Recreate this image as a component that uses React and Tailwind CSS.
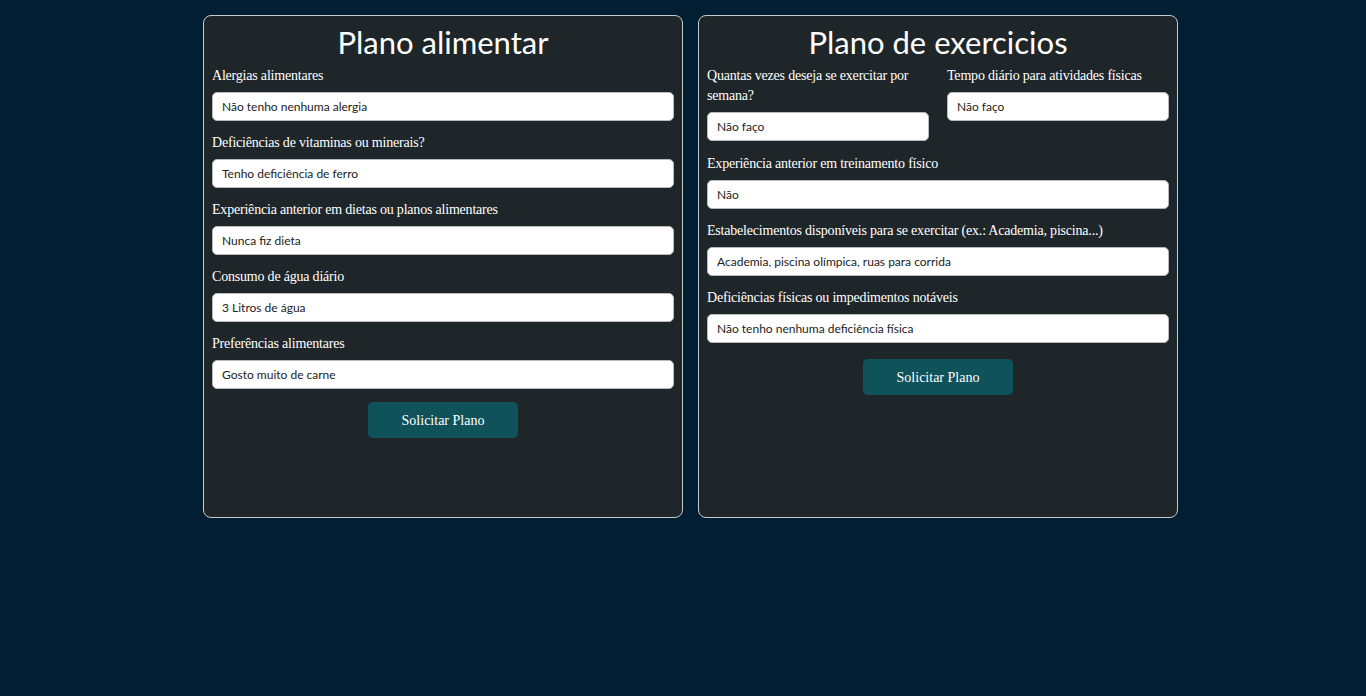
import React from "react";

const serif = { fontFamily: '"Liberation Serif", "Times New Roman", serif' };
const rounded = { fontFamily: 'Lato, "Noto Sans", sans-serif' };

function Field({ label, value, className = "", labelClass = "leading-[21px] mb-[6px]" }) {
  return (
    <div className={"flex flex-col " + className}>
      <label
        style={serif}
        className={"text-[14px] tracking-[-0.2px] text-white " + labelClass}
      >
        {label}
      </label>
      <input
        readOnly
        value={value}
        style={rounded}
        className="h-[29px] w-full rounded-[5px] border border-[#b9b9b9] bg-white px-[9px] text-[12px] text-[#222] outline-none mb-[11px]"
      />
    </div>
  );
}

function Button({ className = "" }) {
  return (
    <div className={"flex justify-center " + className}>
      <button
        style={serif}
        className="w-[150px] h-[36px] rounded-[5px] bg-[#10525a] text-white text-[14px]"
      >
        Solicitar Plano
      </button>
    </div>
  );
}

function Title({ children }) {
  return (
    <h2
      style={rounded}
      className="text-center text-white text-[31px] leading-[34px] mb-[6px]"
    >
      {children}
    </h2>
  );
}

export default function App() {
  return (
    <div className="min-h-[696px] w-full bg-[#011e33] pl-[203px] pt-[15px]">
      <div className="flex gap-[15px]">
        <div className="w-[480px] h-[503px] rounded-[8px] border border-[#c9c9c9] bg-[#1f2629] px-[8px] pt-[9px]">
          <Title>Plano alimentar</Title>
          <Field label="Alergias alimentares" value="Não tenho nenhuma alergia" />
          <Field label="Deficiências de vitaminas ou minerais?" value="Tenho deficiência de ferro" />
          <Field label="Experiência anterior em dietas ou planos alimentares" value="Nunca fiz dieta" />
          <Field label="Consumo de água diário" value="3 Litros de água" />
          <Field label="Preferências alimentares" value="Gosto muito de carne" />
          <Button className="mt-[2px]" />
        </div>
        <div className="w-[480px] h-[503px] rounded-[8px] border border-[#c9c9c9] bg-[#1f2629] px-[8px] pt-[9px]">
          <Title>Plano de exercicios</Title>
          <div className="flex gap-[18px]">
            <Field
              className="w-[222px]"
              labelClass="leading-[20px] mb-[6px] mt-[1px]"
              label="Quantas vezes deseja se exercitar por semana?"
              value="Não faço"
            />
            <Field
              className="flex-1"
              label="Tempo diário para atividades físicas"
              value="Não faço"
            />
          </div>
          <Field
            className="mt-[1px]"
            label="Experiência anterior em treinamento físico"
            value="Não"
          />
          <Field
            label="Estabelecimentos disponíveis para se exercitar (ex.: Academia, piscina...)"
            value="Academia, piscina olímpica, ruas para corrida"
          />
          <Field
            label="Deficiências físicas ou impedimentos notáveis"
            value="Não tenho nenhuma deficiência física"
          />
          <Button className="mt-[5px]" />
        </div>
      </div>
    </div>
  );
}
